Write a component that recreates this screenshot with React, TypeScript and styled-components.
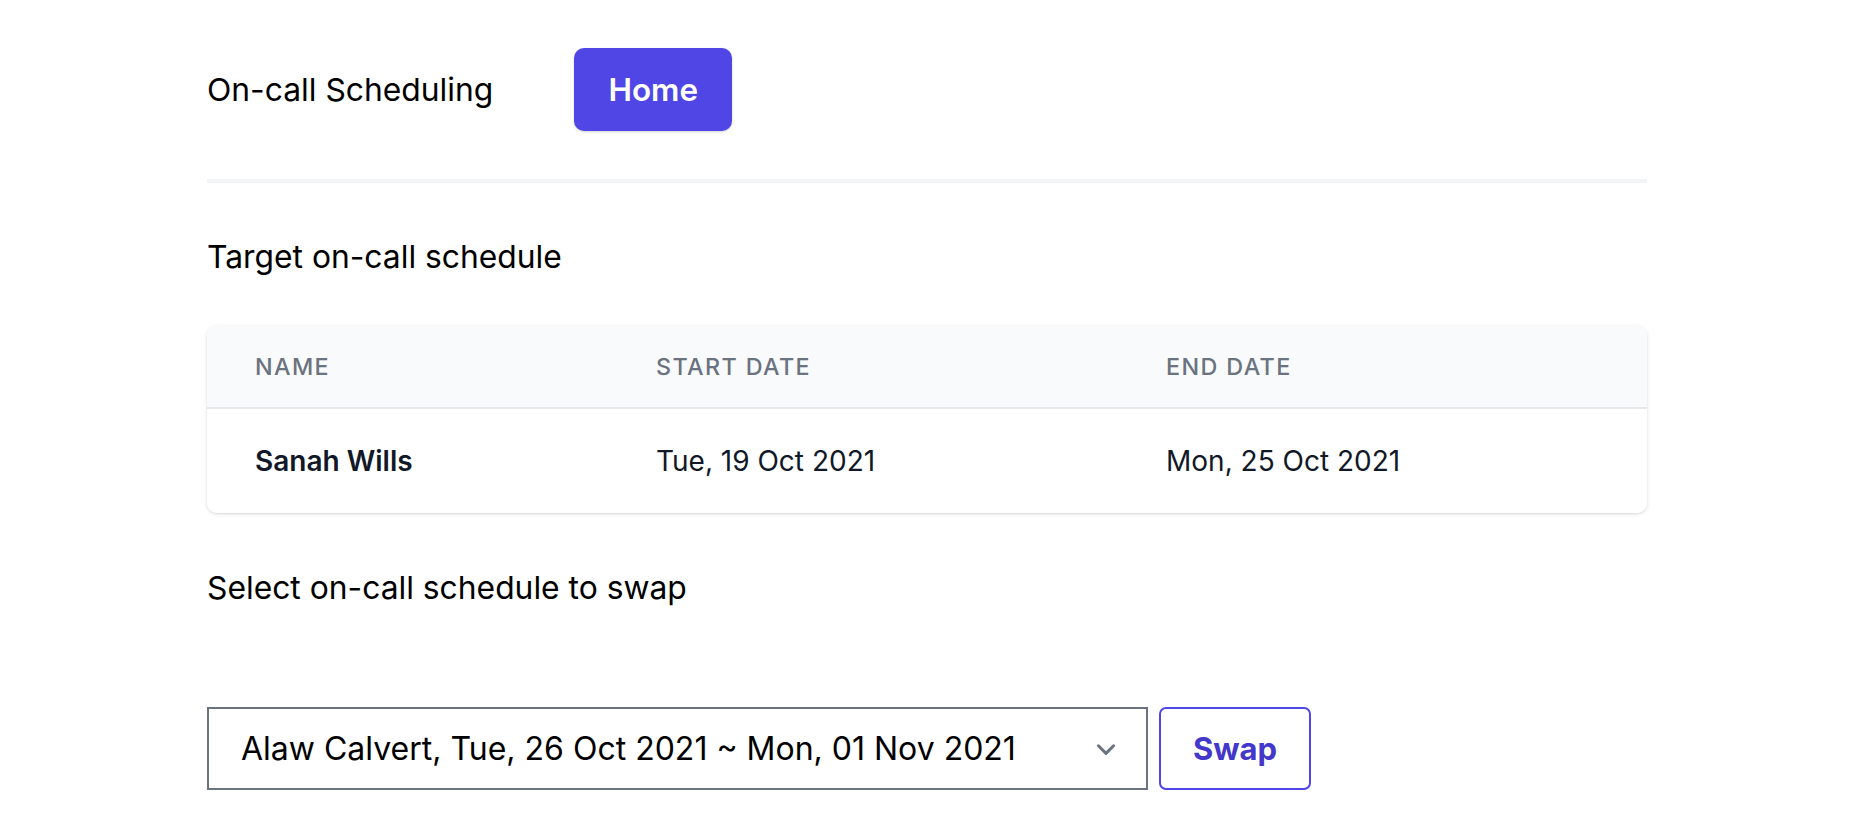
import React from "react";
import styled, { createGlobalStyle } from "styled-components";

const Global = createGlobalStyle`
  html, body { margin: 0; padding: 0; background: #ffffff; }
  body { font-family: Inter, "Noto Sans", sans-serif; color: #000; -webkit-font-smoothing: antialiased; }
  * { box-sizing: border-box; }
`;

const Page = styled.div`
  width: 1440px;
  margin-left: 207px;
  padding-top: 48px;
  display: flex;
  flex-direction: column;
`;

const TopBar = styled.header`
  display: flex;
  align-items: center;
  gap: 81px;
  height: 83px;
`;

const Brand = styled.div`
  font-size: 31.8px;
  line-height: 1;
  font-weight: 400;
  color: #000;
`;

const HomeButton = styled.button`
  width: 158px;
  height: 83px;
  border: none;
  border-radius: 10px;
  background: #4f46e5;
  color: #fff;
  font-family: inherit;
  font-size: 31.5px;
  font-weight: 600;
  box-shadow: 0 1px 3px rgba(0, 0, 0, 0.12), 0 1px 2px rgba(0, 0, 0, 0.06);
`;

const Divider = styled.hr`
  margin: 48px 0 0;
  border: none;
  height: 4px;
  background: #f3f4f6;
`;

const SectionTitle = styled.h2<{ $top: number }>`
  margin: ${(p) => p.$top}px 0 0;
  font-size: 31.8px;
  line-height: 43px;
  font-weight: 400;
  color: #000;
`;

const Card = styled.div`
  margin-top: 48px;
  border-radius: 10px;
  overflow: hidden;
  background: #fff;
  box-shadow: 0 1px 4px rgba(0, 0, 0, 0.12), 0 1px 2px rgba(0, 0, 0, 0.06);
`;

const Row = styled.div<{ $head?: boolean }>`
  display: grid;
  grid-template-columns: 401px 510px 1fr;
  align-items: center;
  height: ${(p) => (p.$head ? "83px" : "104px")};
  background: ${(p) => (p.$head ? "#f9fafb" : "#fff")};
  border-bottom: ${(p) => (p.$head ? "2px solid #e5e7eb" : "none")};
`;

const HeadCell = styled.div`
  padding-left: 48px;
  font-size: 23.3px;
  font-weight: 500;
  letter-spacing: 0.06em;
  text-transform: uppercase;
  color: #6b7280;
`;

const Cell = styled.div<{ $strong?: boolean }>`
  padding-left: 48px;
  font-size: 28px;
  font-weight: ${(p) => (p.$strong ? 600 : 400)};
  color: #111827;
`;

const SwapRow = styled.div`
  margin-top: 98px;
  display: flex;
  gap: 11px;
`;

const SelectBox = styled.div`
  position: relative;
  width: 941px;
  height: 83px;
  border: 2px solid #6b7280;
  display: flex;
  align-items: center;
  padding-left: 32px;
  font-size: 32px;
  color: #000;
`;

const Chevron = styled.svg`
  position: absolute;
  right: 27px;
  top: 50%;
  transform: translateY(-50%);
`;

const SwapButton = styled.button`
  width: 152px;
  height: 83px;
  border: 2px solid #4f46e5;
  border-radius: 7px;
  background: #fff;
  color: #4338ca;
  font-family: inherit;
  font-size: 31px;
  font-weight: 700;
`;

export default function App() {
  return (
    <>
      <Global />
      <Page>
        <TopBar>
          <Brand>On-call Scheduling</Brand>
          <HomeButton>Home</HomeButton>
        </TopBar>
        <Divider />
        <SectionTitle $top={52}>Target on-call schedule</SectionTitle>
        <Card>
          <Row $head>
            <HeadCell>Name</HeadCell>
            <HeadCell>Start date</HeadCell>
            <HeadCell>End date</HeadCell>
          </Row>
          <Row>
            <Cell $strong>Sanah Wills</Cell>
            <Cell>Tue, 19 Oct 2021</Cell>
            <Cell>Mon, 25 Oct 2021</Cell>
          </Row>
        </Card>
        <SectionTitle $top={53}>Select on-call schedule to swap</SectionTitle>
        <SwapRow>
          <SelectBox>
            Alaw Calvert, Tue, 26 Oct 2021 ~ Mon, 01 Nov 2021
            <Chevron width="26" height="26" viewBox="0 0 24 24" fill="none">
              <path d="M5 9l7 7 7-7" stroke="#6b7280" strokeWidth="2.8" strokeLinecap="round" strokeLinejoin="round" />
            </Chevron>
          </SelectBox>
          <SwapButton>Swap</SwapButton>
        </SwapRow>
      </Page>
    </>
  );
}
